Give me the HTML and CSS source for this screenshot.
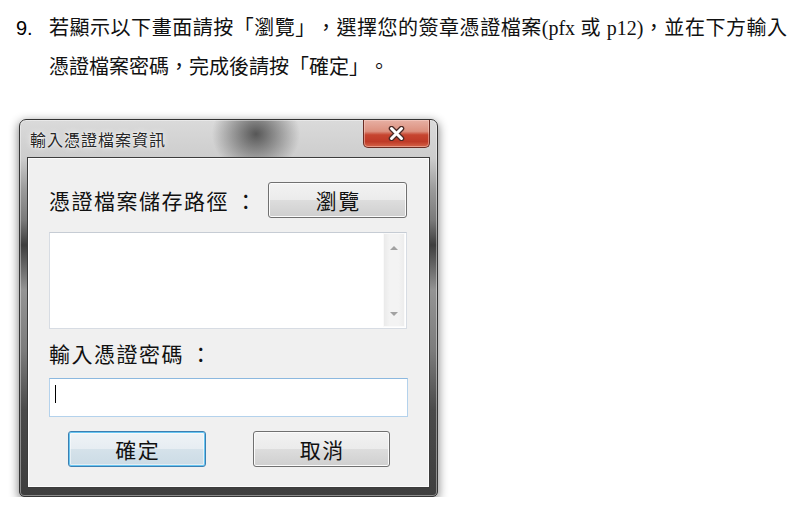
FILE: index.html
```html
<!DOCTYPE html>
<html lang="zh-Hant">
<head>
  <meta charset="UTF-8">
  <meta name="viewport" content="width=device-width, initial-scale=1.0">
  <title>輸入憑證檔案資訊</title>
  <link rel="stylesheet" href="styles.css">
</head>
<body>
  <div class="step">
    <span class="step-num">9.</span>
    <p class="step-text">若顯示以下畫面請按「瀏覽」，選擇您的簽章憑證檔案(pfx 或 p12)，並在下方輸入憑證檔案密碼，完成後請按「確定」。</p>
  </div>

  <div class="window">
    <div class="titlebar">
      <span class="title">輸入憑證檔案資訊</span>
      <div class="close">
        <svg width="17" height="15" viewBox="0 0 17 15">
          <path d="M3.5 2.5 L13.5 12.5 M13.5 2.5 L3.5 12.5" stroke="#4a2a26" stroke-width="5.5" stroke-linecap="round"/>
          <path d="M3.5 2.5 L13.5 12.5 M13.5 2.5 L3.5 12.5" stroke="#ffffff" stroke-width="3" stroke-linecap="round"/>
        </svg>
      </div>
    </div>

    <div class="client">
      <div class="path-row">
        <span class="label">憑證檔案儲存路徑 ：</span>
        <button class="btn btn-browse">瀏覽</button>
      </div>

      <div class="path-box">
        <div class="scrollbar">
          <span class="arrow-up"></span>
          <span class="arrow-down"></span>
        </div>
      </div>

      <div class="label label-pwd">輸入憑證密碼 ：</div>
      <div class="pwd-box"><span class="caret"></span></div>

      <div class="actions">
        <button class="btn btn-ok">確定</button>
        <button class="btn btn-cancel">取消</button>
      </div>
    </div>
  </div>
</body>
</html>
```

FILE: styles.css
```css
body {
  margin: 0;
  background-color: #fff;
  color: #000;
  font-family: "Liberation Serif", "Noto Sans CJK TC", serif;
  text-spacing-trim: space-all;
}

/* paso de la guía */
.step {
  display: flex;
  padding: 9px 0 0 16px;
}

.step-num {
  width: 33px;
  flex-shrink: 0;
  font-family: "Liberation Sans", sans-serif;
  font-size: 20px;
  line-height: 39px;
}

.step-text {
  margin: 0;
  width: 738px;
  font-size: 20px;
  line-height: 39px;
  text-align: justify;
  color: #111;
}

/* ventana */
.window {
  width: 417px;
  margin: 32px 0 0 19px;
  padding-bottom: 9px;
  border: 1px solid #353535;
  border-radius: 7px 7px 5px 5px;
  box-shadow: inset 0 0 0 1px rgba(255, 255, 255, 0.4), 0 3px 10px 1px rgba(0, 0, 0, 0.45);
  background:
    radial-gradient(ellipse 44px 40px at 236px 14px, rgba(55, 55, 55, 0.8), rgba(55, 55, 55, 0)),
    linear-gradient(to bottom, #dadada 0, #cdcdcd 38px, #9a9a9a 70px, #7a7a7a 100px, #3e3e3e 125px, #5a5a5a 140px, #949494 170px, #7c7c7c 230px, #4a4a4a 290px, #3e3e3e 376px);
}

.titlebar {
  display: flex;
  justify-content: space-between;
  align-items: flex-start;
  height: 38px;
}

.title {
  padding-left: 10px;
  font-family: "Noto Sans CJK TC", sans-serif;
  font-size: 16px;
  letter-spacing: 1px;
  line-height: 39px;
  color: #262626;
  text-shadow: 0 0 6px rgba(255, 255, 255, 0.95), 0 0 2px #fff;
}

.close {
  display: flex;
  align-items: center;
  justify-content: center;
  width: 67px;
  height: 28px;
  margin-right: 7px;
  box-sizing: border-box;
  border: 1px solid #6a2c23;
  border-top: none;
  border-radius: 0 0 5px 5px;
  background: linear-gradient(to bottom, #e7b0a4 0%, #dc907e 42%, #c64530 55%, #bf3a27 80%, #d5654a 100%);
  box-shadow: inset 0 0 0 1px rgba(255, 220, 210, 0.45);
}

.client {
  margin: 0 8px;
  padding: 23px 20px 19px;
  border: 1px solid #fcfcfc;
  box-shadow: 0 0 0 1px #3c3c3c;
  background-color: #f0f0f0;
}

.label {
  font-family: "Noto Sans CJK TC", sans-serif;
  font-size: 21px;
  letter-spacing: 1.5px;
  color: #111;
}

.path-row {
  display: flex;
  align-items: center;
  justify-content: space-between;
  height: 36px;
}

/* botones */
.btn {
  box-sizing: border-box;
  height: 36px;
  padding: 0 0 0 1.5px;
  border: 1px solid #707070;
  border-radius: 3px;
  font-family: "Noto Sans CJK TC", sans-serif;
  font-size: 21px;
  letter-spacing: 1.5px;
  color: #111;
  background: linear-gradient(to bottom, #f2f2f2 0%, #ebebeb 50%, #dddddd 50%, #cfcfcf 100%);
  box-shadow: inset 0 0 0 1px #fbfbfb;
}

.btn-browse {
  width: 139px;
  margin-right: 1px;
}

.btn-ok {
  width: 138px;
  border-color: #3c7fb1;
  background: linear-gradient(to bottom, #eff3f6 0%, #e6edf2 50%, #d5e2ea 50%, #cbdbe5 100%);
  box-shadow: inset 0 0 0 1px #67c6f2, inset 0 0 0 2px rgba(255, 255, 255, 0.5);
}

.btn-cancel {
  width: 137px;
}

.path-box {
  display: flex;
  justify-content: flex-end;
  box-sizing: border-box;
  width: 358px;
  height: 97px;
  margin-top: 14px;
  padding: 0 1px 1px 0;
  border: 1px solid #d7dce3;
  border-top-color: #c6ccd4;
  background-color: #fff;
}

.scrollbar {
  display: flex;
  flex-direction: column;
  justify-content: space-between;
  align-items: center;
  box-sizing: border-box;
  width: 22px;
  padding: 13px 0 11px;
  background: linear-gradient(90deg, #e9e9e9, #f3f3f3 30%, #f3f3f3 70%, #ebebeb);
  box-shadow: inset 0 0 0 1px #fafafa;
}

.arrow-up {
  width: 0;
  height: 0;
  border-left: 4px solid transparent;
  border-right: 4px solid transparent;
  border-bottom: 4px solid #a2a2a2;
}

.arrow-down {
  width: 0;
  height: 0;
  border-left: 4px solid transparent;
  border-right: 4px solid transparent;
  border-top: 4px solid #a2a2a2;
}

.label-pwd {
  margin-top: 9px;
  line-height: 30px;
}

.pwd-box {
  box-sizing: border-box;
  width: 359px;
  height: 39px;
  margin-top: 10px;
  padding: 6px 0 0 5px;
  border: 1px solid #b4d2ec;
  border-top-color: #8cb8df;
  background-color: #fff;
}

.caret {
  display: block;
  width: 1px;
  height: 18px;
  background-color: #000;
}

.actions {
  display: flex;
  justify-content: space-between;
  margin-top: 14px;
  padding: 0 18px 0 19px;
}
```
